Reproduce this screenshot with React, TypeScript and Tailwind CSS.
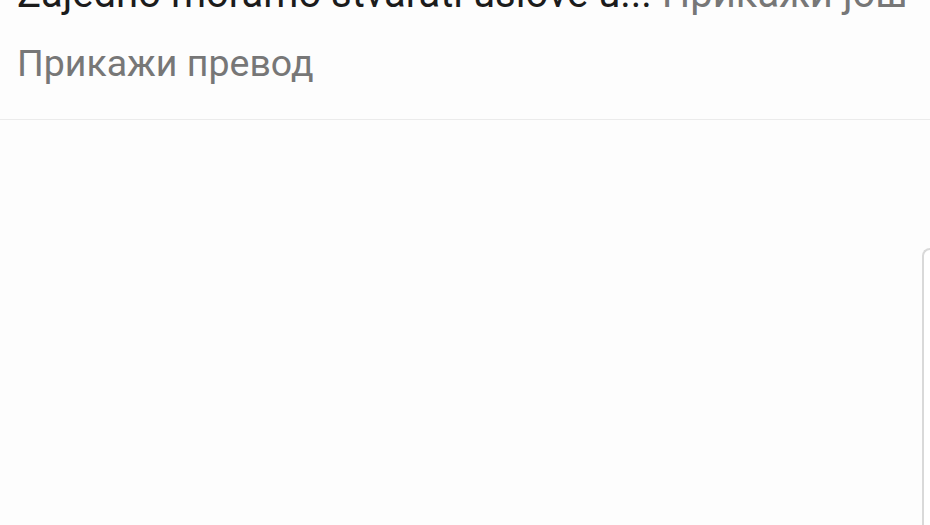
import React from 'react';

export default function App() {
  return (
    <div className="h-[525px] w-[930px] overflow-hidden bg-[#fdfdfd] font-['Roboto',sans-serif] flex flex-col">
      {/* caption block, scrolled partly out of view */}
      <div className="pl-[17px] border-b border-[#ebebeb] shrink-0">
        <p className="mt-[-29px] text-[40px] leading-[46px] whitespace-nowrap text-[#1c1c1c]">
          Zajedno moramo stvarati uslove u... <span className="text-[#777777]">Прикажи још</span>
        </p>
        <p className="mt-[24px] text-[37.5px] leading-[44px] text-[#777777]">Прикажи превод</p>
        <div className="h-[34px]" />
      </div>

      {/* feed below */}
      <div className="flex-1 flex justify-end pt-[128px]">
        <div className="w-[8px] border-l-2 border-t-2 border-[#d9d9d9] rounded-tl-[12px] bg-white" />
      </div>
    </div>
  );
}
